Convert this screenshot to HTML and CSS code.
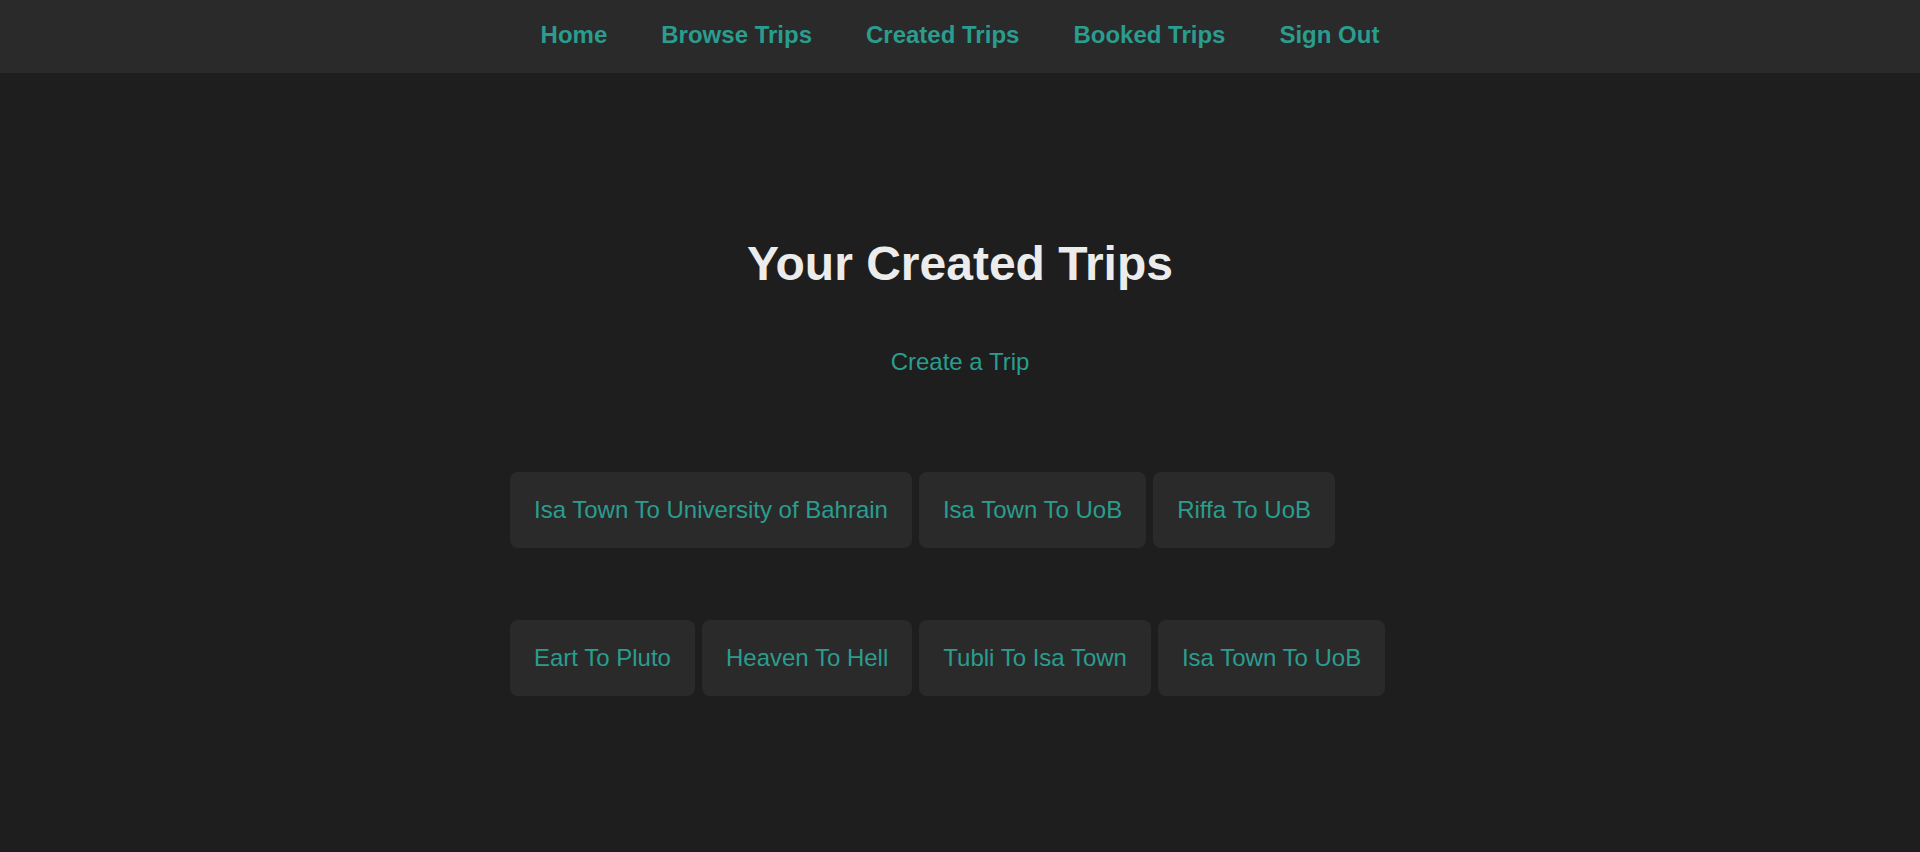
FILE: index.html
```html
<!DOCTYPE html>
<html lang="en">
<head>
<meta charset="utf-8">
<title>Your Created Trips</title>
<link rel="stylesheet" href="styles.css">
</head>
<body>
<nav class="topnav">
  <a class="nav-link" href="#">Home</a>
  <a class="nav-link" href="#">Browse Trips</a>
  <a class="nav-link" href="#">Created Trips</a>
  <a class="nav-link" href="#">Booked Trips</a>
  <a class="nav-link" href="#">Sign Out</a>
</nav>
<main class="page">
  <h1 class="title">Your Created Trips</h1>
  <a class="create-link" href="#">Create a Trip</a>
  <div class="trips">
    <div class="trip-row">
      <a class="trip-card" href="#">Isa Town To University of Bahrain</a>
      <a class="trip-card" href="#">Isa Town To UoB</a>
      <a class="trip-card" href="#">Riffa To UoB</a>
    </div>
    <div class="trip-row">
      <a class="trip-card" href="#">Eart To Pluto</a>
      <a class="trip-card" href="#">Heaven To Hell</a>
      <a class="trip-card" href="#">Tubli To Isa Town</a>
      <a class="trip-card" href="#">Isa Town To UoB</a>
    </div>
  </div>
</main>
</body>
</html>
```
FILE: styles.css
```css
* { box-sizing: border-box; }
html, body {
  margin: 0;
  padding: 0;
  background: #1e1e1e;
  font-family: "Liberation Sans", Arial, sans-serif;
  color: #ececec;
}
body { min-height: 852px; }

.topnav {
  height: 73px;
  background: #2a2a2a;
  display: flex;
  justify-content: center;
  align-items: center;
  gap: 54px;
  padding-bottom: 3px;
}
.nav-link {
  color: #2a9d8f;
  font-weight: bold;
  font-size: 24px;
  text-decoration: none;
}

.page {
  display: flex;
  flex-direction: column;
  align-items: center;
  padding-top: 163px;
}
.title {
  margin: 0;
  font-size: 48px;
  font-weight: bold;
  color: #ececec;
  line-height: 55px;
}
.create-link {
  margin-top: 57px;
  color: #2a9d8f;
  font-size: 24px;
  line-height: 27px;
  text-decoration: none;
}
.trips {
  width: 900px;
  margin-top: 97px;
  display: flex;
  flex-direction: column;
  gap: 72px;
}
.trip-row {
  display: flex;
  gap: 7px;
}
.trip-card {
  display: block;
  background: #2a2a2a;
  border-radius: 8px;
  padding: 24px;
  color: #2a9d8f;
  font-size: 24px;
  line-height: 28px;
  text-decoration: none;
  white-space: nowrap;
}
```
